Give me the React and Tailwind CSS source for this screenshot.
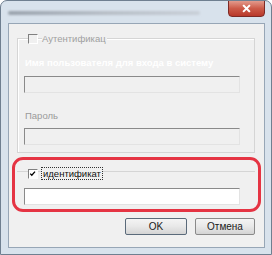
import React from 'react'

function Check({ checked, disabled }) {
  return (
    <span
      className={`relative inline-block w-[10px] h-[10px] shrink-0 border border-t-[#808080] border-l-[#808080] border-b-white border-r-white ${
        disabled ? 'bg-[#f0f0f0]' : 'bg-white'
      }`}
    >
      {checked && (
        <svg viewBox="0 0 10 10" className="absolute left-0 top-0 w-[8px] h-[8px]">
          <path d="M1.5 4.5 L3.5 6.5 L7.5 2" fill="none" stroke="#000" strokeWidth="1.6" />
        </svg>
      )}
    </span>
  )
}

function Field({ disabled }) {
  return (
    <div
      className={`w-[216px] h-[17px] border border-t-[#8a8a8a] border-l-[#8a8a8a] border-b-[#e3e3e3] border-r-[#e3e3e3] ${
        disabled ? 'bg-[#f0f0f0]' : 'bg-white'
      }`}
    />
  )
}

function Button({ children, primary }) {
  return (
    <button
      className={`h-[17px] rounded-[2px] border text-[10px] text-[#1a1a1a] bg-gradient-to-b from-[#f4f4f4] via-[#e8e8e8] to-[#d4d4d4] ${
        primary ? 'w-[62px] border-[#5a6a7a]' : 'w-[60px] border-[#8a8a8a]'
      }`}
    >
      {children}
    </button>
  )
}

export default function App() {
  return (
    <div
      className="w-[272px] h-[255px] flex flex-col bg-[#d8e2ec] border border-[#6f7f90] rounded-t-[7px] overflow-hidden"
      style={{ fontFamily: '"Liberation Sans", Arial, sans-serif' }}
    >
      {/* title bar */}
      <div className="h-[22px] shrink-0 flex items-start pl-[7px] pr-[6px]">
        <div className="mt-[10px] w-[192px] h-[4px] rounded-full bg-gradient-to-r from-[#9aa3ad] via-[#b7bec6] to-[#c9d0d8] blur-[1px]" />
        <div className="ml-auto w-[37px] h-[17px] -mt-[1px] rounded-b-[4px] border border-[#7d2a25] bg-gradient-to-b from-[#e29a8c] via-[#cc5a48] to-[#b8382a] flex items-center justify-center">
          <svg viewBox="0 0 10 10" className="w-[9px] h-[9px]">
            <path d="M2 2 L8 8 M8 2 L2 8" stroke="#fff" strokeWidth="2.2" strokeLinecap="square" />
          </svg>
        </div>
      </div>

      {/* client area */}
      <div className="ml-[7px] mr-[6px] h-[225px] shrink-0 bg-[#f0f0f0] border border-[#97a6b6] relative">
        {/* group 1 */}
        <div className="ml-[8px] mt-[14px] w-[238px] h-[115px] border border-[#d5d5d5] shadow-[inset_1px_1px_0_#fff]">
          <div className="-mt-[6px] ml-[10px] h-[12px] flex items-center gap-[4px]">
            <Check disabled />
            <span className="bg-[#f0f0f0] pr-[1px] text-[9.5px] leading-none text-[#a0a0a0]">
              Аутентификац
            </span>
          </div>
          <div className="ml-[7px] mt-[13px] text-[9.5px] font-bold leading-none text-white">
            Имя пользователя для входа в систему
          </div>
          <div className="ml-[6px] mt-[8px]">
            <Field disabled />
          </div>
          <div className="ml-[7px] mt-[18px] text-[9.5px] leading-none text-[#9a9a9a]">Пароль</div>
          <div className="ml-[6px] mt-[8px]">
            <Field disabled />
          </div>
        </div>

        {/* group 2 */}
        <div className="ml-[8px] mt-[18px] w-[238px] border-t border-[#d5d5d5]">
          <div className="-mt-[5px] ml-[11px] h-[13px] flex items-center gap-[3px]">
            <Check checked />
            <span className="bg-[#f0f0f0] h-[13px] px-[1px] flex items-center border border-dotted border-[#333] text-[9.5px] leading-none text-[#111]">
              идентификат
            </span>
          </div>
          <div className="ml-[7px] mt-[8px]">
            <Field />
          </div>
        </div>

        <div className="mt-[13px] mr-[9px] flex justify-end gap-[8px]">
          <Button primary>OK</Button>
          <Button>Отмена</Button>
        </div>

        {/* red highlight overlay */}
        <div className="absolute left-[3px] top-[133px] w-[249px] h-[55px] rounded-[11px] border-[3px] border-[#e53443] pointer-events-none" />
      </div>
    </div>
  )
}
